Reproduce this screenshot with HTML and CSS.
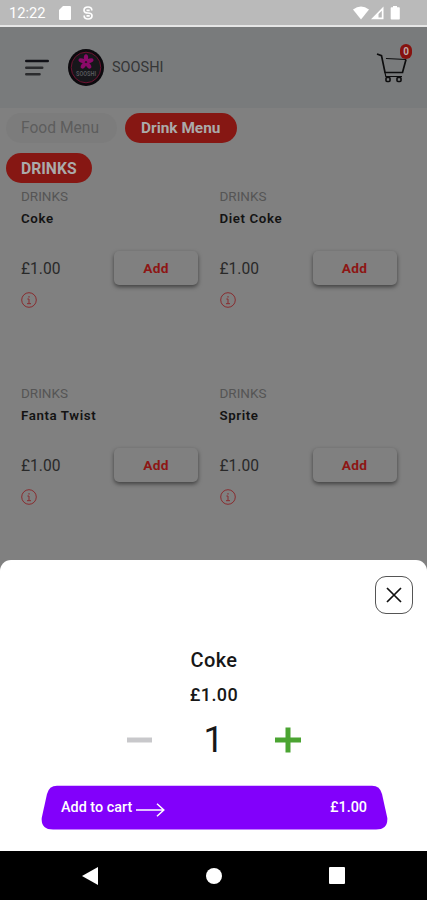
FILE: index.html
```html
<!DOCTYPE html>
<html lang="en">
<head>
<meta charset="utf-8">
<title>Sooshi</title>
<link rel="stylesheet" href="styles.css">
</head>
<body>
<svg width="0" height="0" class="defs">
  <symbol id="info" viewBox="0 0 16 16"><circle cx="8" cy="8" r="7.3"/><path d="M8 4v1.600M6.400 7H8v4.500M6 11.700h4"/></symbol>
</svg>
<div class="status">
  <span class="time">12:22</span>
  <svg class="sd" width="12" height="14" viewBox="0 0 12 14"><path d="M4 0h7q1 0 1 1v12q0 1-1 1H1q-1 0-1-1V4z"/></svg>
  <svg class="sync" width="10" height="14" viewBox="0 0 10 14"><path d="M8.800 4.500C9 2 7.500 1 5 1S1 2.300 1 4.300 3 7 5 7s4 .7 4 2.800S7.500 13 5 13 1 12 1.200 9.500M3.500 4.300h3.200M3.500 9.800h3.200"/></svg>
  <svg class="signals" width="48" height="14" viewBox="0 0 48 14"><path d="M0 3.400Q8 -2.500 16 3.400L8 13.500z"/><path d="M18 13.200L30.500 .5v12.700zM25.500 11.600h3.300V4.800l-3.300 3.300z" fill-rule="evenodd"/><path d="M40 1.200V0h4v1.200h2q.8 0 .8.800v10.800q0 .8-.8.800h-7.500q-.8 0-.8-.8V2q0-.8.8-.8z"/></svg>
</div>
<header class="header">
  <svg class="menu" width="24" height="18" viewBox="0 0 24 18"><path d="M1.300 2h21.400" stroke="#111117"/><path d="M1.300 8.700h15.900M1.300 15.200h13.200" stroke="#2b2c2e"/></svg>
  <svg class="logo" width="36" height="37" viewBox="0 0 36 37">
    <ellipse cx="18" cy="18.500" rx="18" ry="18.500" fill="#0c0a0e"/>
    <ellipse cx="18" cy="18.500" rx="14.800" ry="15.300" fill="#17171b" stroke="#6d1230"/>
    <g fill="#8b0a69">
      <ellipse cx="18" cy="8.700" rx="2.200" ry="3.500"/>
      <ellipse cx="18" cy="8.700" rx="2.200" ry="3.500" transform="rotate(72 18 13)"/>
      <ellipse cx="18" cy="8.700" rx="2.200" ry="3.500" transform="rotate(144 18 13)"/>
      <ellipse cx="18" cy="8.700" rx="2.200" ry="3.500" transform="rotate(216 18 13)"/>
      <ellipse cx="18" cy="8.700" rx="2.200" ry="3.500" transform="rotate(288 18 13)"/>
    </g>
    <text x="18" y="27" text-anchor="middle" textLength="20" lengthAdjust="spacingAndGlyphs">SOOSHI</text>
  </svg>
  <span class="brand">SOOSHI</span>
  <div class="cart">
    <svg width="32" height="32" viewBox="0 0 32 32"><path d="M1 2l4.500 1.700L9 20.500H26.500L30 7.500" stroke-width="1.700"/><path d="M10 6.500L30 7.500" stroke-width="1.100"/><path d="M9 20.500l.8 4H26" stroke-width="1.200"/><rect x="10" y="25.500" width="4" height="4" rx="1" stroke-width="1.600"/><rect x="21" y="25.500" width="4" height="4" rx="1" stroke-width="1.600"/></svg>
    <span class="badge">0</span>
  </div>
</header>
<main class="content">
  <div class="tabs"><span class="pill muted">Food Menu</span><span class="pill drink">Drink Menu</span></div>
  <span class="pill category">DRINKS</span>
  <div class="grid">
    <article><small>DRINKS</small><h3>Coke</h3><div class="buy"><span>£1.00</span><button>Add</button></div><svg class="info"><use href="#info"/></svg></article>
    <article><small>DRINKS</small><h3>Diet Coke</h3><div class="buy"><span>£1.00</span><button>Add</button></div><svg class="info"><use href="#info"/></svg></article>
    <article><small>DRINKS</small><h3>Fanta Twist</h3><div class="buy"><span>£1.00</span><button>Add</button></div><svg class="info"><use href="#info"/></svg></article>
    <article><small>DRINKS</small><h3>Sprite</h3><div class="buy"><span>£1.00</span><button>Add</button></div><svg class="info"><use href="#info"/></svg></article>
  </div>
</main>
<section class="sheet">
  <div class="close"><svg width="16" height="16" viewBox="0 0 16 16"><path d="M1 1l14 14M15 1L1 15"/></svg></div>
  <h2>Coke</h2>
  <div class="price">£1.00</div>
  <div class="stepper">
    <svg width="25" height="26" viewBox="0 0 25 26"><path d="M0 13h25" stroke="#c8c8cb"/></svg>
    <span>1</span>
    <svg width="26" height="26" viewBox="0 0 26 26"><path d="M0 13h26M13 .5v25" stroke="#4ba432"/></svg>
  </div>
  <div class="checkout">
    <svg class="shape" width="347" height="45" viewBox="0 0 347 45"><path d="M16 .8H331Q339 .8 341 9L346.300 33Q347 44.500 335 44.500H12Q0 44.500 .7 33L6 9Q8 .8 16 .8z"/></svg>
    <span>Add to cart</span>
    <svg class="arrow" width="29" height="14" viewBox="0 0 29 14"><path d="M0 7h27.500M21 .7L27.800 7 21 13.300"/></svg>
    <span class="total">£1.00</span>
  </div>
</section>
<nav class="nav">
  <svg width="16" height="18" viewBox="0 0 16 18"><path d="M0 9L16 0v18z"/></svg>
  <svg width="16" height="16" viewBox="0 0 16 16"><circle cx="8" cy="8" r="8"/></svg>
  <svg width="16" height="17" viewBox="0 0 16 17"><rect width="16" height="17" rx="1"/></svg>
</nav>
</body>
</html>
```
FILE: styles.css
```css
* { box-sizing: border-box; }
body { margin: 0; width: 427px; height: 900px; overflow: hidden; display: flex; flex-direction: column; background: #808080; font-family: Roboto, "Liberation Sans", sans-serif; }
svg { display: block; flex: none; }
.defs { position: absolute; }
.status { height: 27px; flex: none; display: flex; align-items: center; padding: 0 27px 0 9px; background: #bababa; border-bottom: 2px solid #e6e6e6; color: #fff; fill: #fff; }
.time { width: 50px; font-size: 14.7px; line-height: 25px; padding-top: 2px; }
.sync { margin-left: 12px; fill: none; stroke: #fff; stroke-width: 1.7; }
.signals { margin-left: auto; margin-right: -1px; }
.header { height: 81px; flex: none; display: flex; align-items: center; padding: 0 18px 0 25px; background: #797b7c; }
.menu { stroke-width: 2.6; stroke-linecap: round; fill: none; }
.logo { margin-left: 19px; }
.logo text { font-size: 7px; font-weight: 700; fill: #55565a; }
.brand { margin-left: 8px; font-size: 14.5px; color: #353637; }
.cart { position: relative; margin-left: auto; margin-right: 1px; }
.cart svg { fill: none; stroke: #0d0d0e; }
.badge { position: absolute; left: 24px; top: -8px; width: 12px; height: 15px; border-radius: 6px; background: #86120f; color: #bcaaaa; font-size: 10px; font-weight: 700; line-height: 15px; text-align: center; }
.content { height: 452px; flex: none; padding: 5px 0 0 6px; display: flex; flex-direction: column; align-items: flex-start; }
.tabs { display: flex; gap: 8px; margin-bottom: 10px; }
.pill { height: 30px; line-height: 31px; padding: 0 15px; border-radius: 15px; background: #861713; color: #aaa; font-size: 15.6px; font-weight: 700; white-space: nowrap; }
.muted { width: 111px; background: #7c7c7c; color: #5d5d5d; font-weight: 400; }
.drink { width: 112px; padding-left: 16px; font-size: 15.4px; }
.category { width: 86px; font-size: 15.7px; }
.grid { display: grid; grid-template-columns: 198.5px 198.5px; grid-auto-rows: 197.4px; padding: 5px 0 0 15px; }
small { display: block; height: 20px; line-height: 17px; font-size: 13.5px; color: #555; }
h3 { margin: 0; font-size: 13.3px; line-height: 22px; letter-spacing: .6px; font-weight: 600; color: #131313; }
.buy { display: flex; align-items: center; justify-content: space-between; height: 34px; margin: 21px 21.5px 0 0; }
.buy span { font-size: 15.6px; padding-top: 1px; color: #292929; }
button { width: 84px; height: 34px; padding: 0; border: 0; border-radius: 5px; background: #808080; box-shadow: 0 2px 4px #404040; color: #8d1614; font: 700 13.7px Roboto, sans-serif; letter-spacing: .3px; }
.info { width: 16px; height: 16px; margin-top: 7px; fill: none; stroke: #882b2e; stroke-width: 1; }
.sheet { height: 291px; flex: none; padding: 16px 14px 0; display: flex; flex-direction: column; align-items: center; background: #fff; border-radius: 11px 11px 0 0; color: #171717; }
.close { align-self: flex-end; width: 38px; height: 38px; border: 1px solid #555; border-radius: 11px; display: grid; place-items: center; }
.close svg { fill: none; stroke: #111; stroke-width: 1.7; }
h2 { margin: 34px 0 0 1px; font-size: 20px; line-height: 24px; font-weight: 500; letter-spacing: .4px; }
.price { margin: 12px 0 0 1px; font-size: 18px; line-height: 22px; font-weight: 500; letter-spacing: .4px; }
.stepper { height: 46px; margin: 11px 0 0 1px; width: 175px; display: flex; align-items: center; justify-content: space-between; }
.stepper svg { fill: none; stroke-width: 5; }
.stepper span { font-size: 36px; line-height: 46px; }
.checkout { position: relative; width: 347px; height: 45px; margin-top: 22px; margin-left: 2px; padding: 0 21px 0 20px; display: flex; align-items: center; color: #fff; }
.shape { position: absolute; inset: 0; fill: #8200fb; }
.checkout span { position: relative; font-size: 14.4px; font-weight: 500; }
.arrow { position: relative; margin: 4px 0 0 4px; fill: none; stroke: #fff; stroke-width: 1.5; }
.checkout .total { margin-left: auto; }
.nav { height: 49px; flex: none; display: flex; align-items: center; justify-content: space-between; padding: 0 82px 0 82px; background: #000; fill: #fff; }
```
